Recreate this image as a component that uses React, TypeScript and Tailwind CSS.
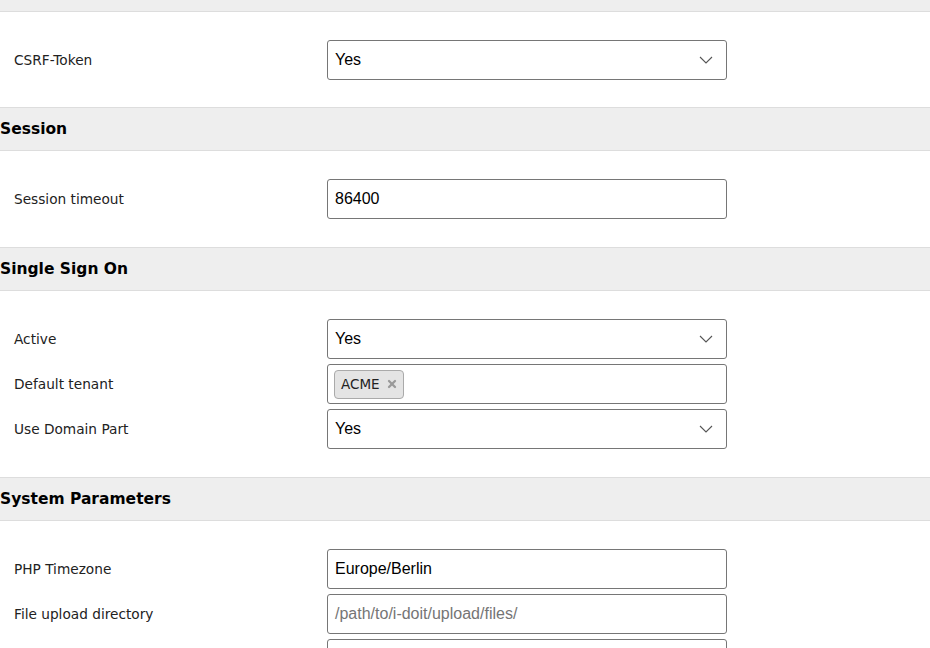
import { X } from "lucide-react";

type Field =
  | { label: string; kind: "select"; value: string }
  | { label: string; kind: "text"; value?: string; placeholder?: string }
  | { label: string; kind: "tags"; tags: string[] };

const sections: { title?: string; fields: Field[] }[] = [
  { fields: [{ label: "CSRF-Token", kind: "select", value: "Yes" }] },
  { title: "Session", fields: [{ label: "Session timeout", kind: "text", value: "86400" }] },
  {
    title: "Single Sign On",
    fields: [
      { label: "Active", kind: "select", value: "Yes" },
      { label: "Default tenant", kind: "tags", tags: ["ACME"] },
      { label: "Use Domain Part", kind: "select", value: "Yes" },
    ],
  },
  {
    title: "System Parameters",
    fields: [
      { label: "PHP Timezone", kind: "text", value: "Europe/Berlin" },
      { label: "File upload directory", kind: "text", placeholder: "/path/to/i-doit/upload/files/" },
      { label: "Image upload directory", kind: "text", placeholder: "/path/to/i-doit/upload/images/" },
    ],
  },
];

function Chevron() {
  return (
    <svg width="14" height="8" viewBox="0 0 14 8" fill="none" className="text-[#555]">
      <polyline points="1,1 7,7 13,1" stroke="currentColor" strokeWidth="1.1" />
    </svg>
  );
}

function Control({ field }: { field: Field }) {
  const box =
    "w-[400px] h-[40px] border border-[#767676] rounded-[3px] bg-white flex items-center font-['Liberation_Sans',Arial,sans-serif] text-[16px] text-black";

  if (field.kind === "select") {
    return (
      <div className={`${box} pl-[7px] pr-[13px] justify-between`}>
        <span>{field.value}</span>
        <Chevron />
      </div>
    );
  }

  if (field.kind === "tags") {
    return (
      <div className={`${box} px-[6px] gap-1`}>
        {field.tags.map((t) => (
          <span
            key={t}
            className="h-[29px] flex items-center gap-[6px] pl-[6px] pr-[5px] bg-[#e4e4e4] border border-[#aaa] rounded-[4px] font-['DejaVu_Sans',sans-serif] text-[13.5px] text-[#222]"
          >
            {t}
            <X className="h-[12px] w-[12px] text-[#999]" strokeWidth={4.5} />
          </span>
        ))}
      </div>
    );
  }

  return (
    <div className={`${box} px-[7px]`}>
      {field.value ? (
        <span>{field.value}</span>
      ) : (
        <span className="text-[#757575]">{field.placeholder}</span>
      )}
    </div>
  );
}

export default function App() {
  return (
    <div className="w-[930px] h-[648px] overflow-hidden bg-white font-['DejaVu_Sans',sans-serif]">
      <div className="h-[12px] bg-[#eeeeee] border-b border-[#dddddd]" />
      {sections.map((s, i) => (
        <div key={i}>
          {s.title && (
            <div className="h-[44px] bg-[#eeeeee] border-y border-[#dddddd] flex items-center pt-[1px]">
              <h2 className="text-[15.5px] font-bold text-black">{s.title}</h2>
            </div>
          )}
          <div className={`pt-[28px] ${s.title ? "pb-[28px]" : "pb-[27px]"} flex flex-col gap-[5px]`}>
            {s.fields.map((f) => (
              <div key={f.label} className="flex items-center">
                <label className="w-[327px] pl-[14px] text-[13.7px] text-[#222]">{f.label}</label>
                <Control field={f} />
              </div>
            ))}
          </div>
        </div>
      ))}
    </div>
  );
}
